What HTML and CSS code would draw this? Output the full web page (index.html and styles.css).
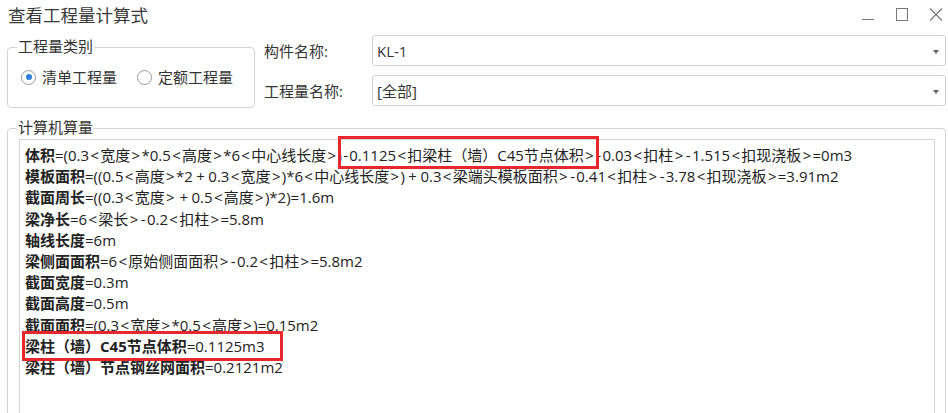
FILE: index.html
```html
<!DOCTYPE html>
<html lang="zh-CN">
<head>
    <meta charset="UTF-8">
    <title>查看工程量计算式</title>
    <link rel="stylesheet" href="styles.css">
</head>
<body>
    <div class="titlebar">
        <span class="title">查看工程量计算式</span>
        <div class="win-buttons">
            <svg width="14" height="14" viewBox="0 0 14 14"><line x1="1" y1="11.5" x2="13" y2="11.5" stroke="#777" stroke-width="1"/></svg>
            <svg width="14" height="14" viewBox="0 0 14 14"><rect x="1.5" y="0.5" width="11" height="12" fill="none" stroke="#777" stroke-width="1"/></svg>
            <svg width="14" height="14" viewBox="0 0 14 14"><path d="M1 0.5 L13 12.5 M13 0.5 L1 12.5" stroke="#777" stroke-width="1.1"/></svg>
        </div>
    </div>

    <div class="top">
        <!-- 工程量类别 -->
        <fieldset class="group kind">
            <legend>工程量类别</legend>
            <div class="radios">
                <label class="radio"><span class="dot checked"></span>清单工程量</label>
                <label class="radio"><span class="dot"></span>定额工程量</label>
            </div>
        </fieldset>

        <div class="fields">
            <div class="field">
                <span class="field-label">构件名称:</span>
                <div class="combo">KL-1<span class="caret"></span></div>
            </div>
            <div class="field">
                <span class="field-label">工程量名称:</span>
                <div class="combo">[全部]<span class="caret"></span></div>
            </div>
        </div>
    </div>

    <!-- 计算机算量 -->
    <fieldset class="group calc">
        <legend>计算机算量</legend>
        <div class="result">
            <div class="line"><b>体积</b>=(0.3<i>&lt;</i>宽度<i>&gt;</i>*0.5<i>&lt;</i>高度<i>&gt;</i>*6<i>&lt;</i>中心线长度<i>&gt;</i>)<span class="mark mark-a"><i>-</i>0.1125<i>&lt;</i>扣梁柱（墙）C45节点体积<i>&gt;</i></span><i>-</i>0.03<i>&lt;</i>扣柱<i>&gt;</i><i>-</i>1.515<i>&lt;</i>扣现浇板<i>&gt;</i>=0m3</div>
            <div class="line"><b>模板面积</b>=((0.5<i>&lt;</i>高度<i>&gt;</i>*2<i class="plus">+</i>0.3<i>&lt;</i>宽度<i>&gt;</i>)*6<i>&lt;</i>中心线长度<i>&gt;</i>)<i class="plus">+</i>0.3<i>&lt;</i>梁端头模板面积<i>&gt;</i><i>-</i>0.41<i>&lt;</i>扣柱<i>&gt;</i><i>-</i>3.78<i>&lt;</i>扣现浇板<i>&gt;</i>=3.91m2</div>
            <div class="line"><b>截面周长</b>=((0.3<i>&lt;</i>宽度<i>&gt;</i><i class="plus">+</i>0.5<i>&lt;</i>高度<i>&gt;</i>)*2)=1.6m</div>
            <div class="line"><b>梁净长</b>=6<i>&lt;</i>梁长<i>&gt;</i><i>-</i>0.2<i>&lt;</i>扣柱<i>&gt;</i>=5.8m</div>
            <div class="line"><b>轴线长度</b>=6m</div>
            <div class="line"><b>梁侧面面积</b>=6<i>&lt;</i>原始侧面面积<i>&gt;</i><i>-</i>0.2<i>&lt;</i>扣柱<i>&gt;</i>=5.8m2</div>
            <div class="line"><b>截面宽度</b>=0.3m</div>
            <div class="line"><b>截面高度</b>=0.5m</div>
            <div class="line"><b>截面面积</b>=(0.3<i>&lt;</i>宽度<i>&gt;</i>*0.5<i>&lt;</i>高度<i>&gt;</i>)=0.15m2</div>
            <div class="line"><span class="mark mark-b"><b>梁柱（墙）C45节点体积</b>=0.1125m3</span></div>
            <div class="line"><b>梁柱（墙）节点钢丝网面积</b>=0.2121m2</div>
        </div>
    </fieldset>
</body>
</html>
```

FILE: styles.css
```css
body {
    margin: 0;
    font-family: "Open Sans", "Noto Sans CJK SC", sans-serif;
    font-size: 15px;
    color: #333;
    background: #fff;
    overflow: hidden;
}

.titlebar {
    height: 30px;
    display: flex;
    align-items: center;
    justify-content: space-between;
    padding: 0 5px 0 8px;
}

.title {
    font-size: 17.5px;
    color: #3a3a3a;
    margin-top: -2px;
}

.win-buttons {
    display: flex;
    gap: 20px;
    margin-top: -1px;
}

.top {
    display: flex;
    padding: 8px 2px 0 7px;
}

.group {
    margin: 0;
    border: 1px solid #d4d4d4;
    border-radius: 4px;
    padding: 0;
}

.group legend {
    padding: 0 1px;
    margin-left: 9px;
    line-height: 18px;
    color: #333;
    position: relative;
    top: -1px;
}

.kind {
    width: 248px;
    height: 70px;
    box-sizing: border-box;
}

.radios {
    display: flex;
    gap: 20px;
    padding: 11px 0 0 13px;
}

.radio {
    display: flex;
    align-items: center;
    gap: 6px;
    line-height: 20px;
}

.dot {
    width: 15px;
    height: 15px;
    border: 1px solid #9a9a9a;
    border-radius: 50%;
    box-sizing: border-box;
    position: relative;
}

.dot.checked::after {
    content: "";
    position: absolute;
    left: 3.5px;
    top: 3.5px;
    width: 6px;
    height: 6px;
    border-radius: 50%;
    background: #2f7fe0;
}

.fields {
    flex: 1;
    display: flex;
    flex-direction: column;
    gap: 9px;
    margin-left: 9px;
    margin-top: -3px;
}

.field {
    display: flex;
    align-items: center;
}

.field-label {
    width: 108px;
}

.combo {
    flex: 1;
    height: 31px;
    border: 1px solid #cfcfcf;
    border-radius: 3px;
    box-sizing: border-box;
    display: flex;
    align-items: center;
    padding-left: 4px;
    position: relative;
}

.caret {
    position: absolute;
    right: 6px;
    top: 14px;
    border-left: 3px solid transparent;
    border-right: 3px solid transparent;
    border-top: 4px solid #666;
}

.calc {
    margin: 11px 2px 0 7px;
    padding: 2px 10px 0 11px;
    height: 320px;
}

.calc legend {
    margin-left: -2px;
}

.result {
    border: 1px solid #d4d4d4;
    border-bottom: none;
    height: 300px;
    padding: 5px 5px 0 5px;
    color: #222;
}

.line {
    line-height: 21.2px;
    white-space: nowrap;
}

.line b {
    font-weight: bold;
}

/* 比较符、减号和加号在原界面字体里更宽 */
.line i {
    font-style: normal;
    padding: 0 1.3px;
}

.line i.plus {
    padding: 0 3.5px;
}

.mark {
    position: relative;
}

.mark::after {
    content: "";
    position: absolute;
    border: 3px solid #e8262d;
    pointer-events: none;
}

.mark-a::after {
    left: -4px;
    right: -4px;
    top: -9px;
    bottom: -4px;
}

.mark-b::after {
    left: -3px;
    right: -18px;
    top: -5px;
    bottom: -5px;
}
```
